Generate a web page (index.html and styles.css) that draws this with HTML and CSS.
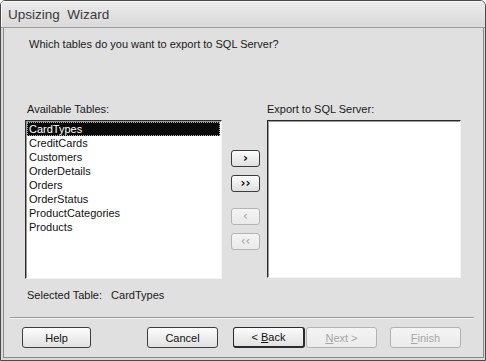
FILE: index.html
```html
<!DOCTYPE html>
<html lang="en">
<head>
    <meta charset="UTF-8">
    <title>Upsizing Wizard</title>
    <link rel="stylesheet" href="styles.css">
</head>
<body>
    <div class="window">
        <div class="titlebar">Upsizing&nbsp; Wizard</div>
        <div class="client">
            <p class="question">Which tables do you want to export to SQL Server?</p>

            <div class="tables">
                <div class="col-left">
                    <div class="label">Available Tables:</div>
                    <ul class="listbox listbox-left">
                        <li class="selected">CardTypes</li>
                        <li>CreditCards</li>
                        <li>Customers</li>
                        <li>OrderDetails</li>
                        <li>Orders</li>
                        <li>OrderStatus</li>
                        <li>ProductCategories</li>
                        <li>Products</li>
                    </ul>
                </div>

                <div class="movers">
                    <button class="mv">&#x203A;</button>
                    <button class="mv">&#x203A;&#x203A;</button>
                    <button class="mv off gap">&#x2039;</button>
                    <button class="mv off">&#x2039;&#x2039;</button>
                </div>

                <div class="col-right">
                    <div class="label">Export to SQL Server:</div>
                    <ul class="listbox listbox-right"></ul>
                </div>
            </div>

            <div class="selected-table">
                <span>Selected Table:</span>
                <span class="sel-name">CardTypes</span>
            </div>

            <div class="separator"></div>

            <div class="footer">
                <button class="btn btn-help">Help</button>
                <button class="btn btn-cancel">Cancel</button>
                <button class="btn btn-back">&lt; <u>B</u>ack</button>
                <button class="btn off btn-next"><u>N</u>ext &gt;</button>
                <button class="btn off btn-finish"><u>F</u>inish</button>
            </div>
        </div>
    </div>
</body>
</html>
```

FILE: styles.css
```css
/* Page */
body {
    margin: 0;
    background: #ffffff;
    font-family: 'Liberation Sans', Arial, sans-serif;
    font-size: 11px;
    color: #1a1a1a;
}

/* Window frame */
.window {
    width: 484px;
    height: 359px;
    border: 1px solid #4a4a4a;
    border-radius: 5px 6px 0 0;
    background: #dadada;
    display: flex;
    flex-direction: column;
    overflow: hidden;
}

.titlebar {
    height: 26px;
    line-height: 28px;
    padding-left: 7px;
    font-size: 13.5px;
    color: #3a3a3a;
    background: linear-gradient(#ececec, #e2e2e2 50%, #d9d9d9);
    border-bottom: 1px solid #9c9c9c;
    box-shadow: inset 1px 1px 0 #f8f8f8;
}

.client {
    flex: 1;
    margin: 0 1px 2px 2px;
    border: 1px solid #8a8a8a;
    border-top: none;
    background: #e0e0e0;
    display: flex;
    flex-direction: column;
}

/* Question */
.question {
    margin: 9px 0 0 25px;
    height: 14px;
    line-height: 14px;
}

/* Tables area */
.tables {
    display: flex;
    margin: 51px 0 0 21px;
}

.label {
    height: 14px;
    line-height: 14px;
    padding-left: 2px;
    margin-bottom: 4px;
}

.col-left {
    width: 197px;
}

.col-right {
    width: 194px;
}

.col-right .label {
    padding-left: 0;
}

.listbox {
    list-style: none;
    margin: 0;
    padding: 1px 1px 0 1px;
    height: 156px;
    background: #ffffff;
    border: 1px solid;
    border-color: #2a2a2a #f4f4f4 #f4f4f4 #2a2a2a;
    box-shadow: inset 1px 1px 0 #9a9a9a;
}

.listbox-right {
    margin-top: 2px;
    height: 155px;
}

.listbox li {
    height: 14px;
    line-height: 14px;
    padding-left: 2px;
    color: #111111;
}

.listbox li.selected {
    height: 12px;
    line-height: 12px;
    background: #0a0a0a;
    color: #ffffff;
    border: 1px dotted #b0b0b0;
    padding-left: 1px;
}

/* Move buttons */
.movers {
    width: 29px;
    margin: 48px 7px 0 9px;
    display: flex;
    flex-direction: column;
    gap: 8px;
}

.mv {
    width: 29px;
    height: 17px;
    padding: 0;
    font-family: 'DejaVu Sans', sans-serif;
    font-size: 12px;
    font-weight: bold;
    line-height: 13px;
    color: #111111;
    background: linear-gradient(#fdfdfd, #ececec 55%, #e0e0e0);
    border: 1px solid #3c3c3c;
    border-radius: 3px;
}

.mv.gap {
    margin-top: 8px;
}

.mv.off {
    color: #a4a4a4;
    font-weight: normal;
    border-color: #b4b4b4;
    background: linear-gradient(#f4f4f4, #eaeaea);
}

/* Selected table line */
.selected-table {
    margin: 9px 0 0 23px;
    height: 14px;
    line-height: 14px;
}

.sel-name {
    margin-left: 6px;
}

.separator {
    margin: 15px 9px 0 6px;
    height: 1px;
    background: #9a9a9a;
    border-bottom: 1px solid #f2f2f2;
}

/* Footer buttons */
.footer {
    display: flex;
    margin: 8px 0 0 18px;
}

.btn {
    width: 69px;
    height: 21px;
    padding: 0;
    font-family: 'Liberation Sans', Arial, sans-serif;
    font-size: 11px;
    color: #111111;
    background: linear-gradient(#fcfcfc, #eeeeee 50%, #e2e2e2);
    border: 1px solid #3e3e3e;
    border-radius: 3px;
}

.btn u {
    text-decoration: underline;
}

.btn.off {
    color: #a6a6a6;
    border-color: #b2b2b2;
    background: linear-gradient(#f4f4f4, #ebebeb);
}

.btn-cancel {
    width: 71px;
    margin-left: 56px;
}

.btn-back {
    width: 72px;
    margin-left: 15px;
    border-width: 1px 2px 2px 1px;
    border-color: #2a2a2a;
}

.btn-next {
    width: 71px;
    margin-left: 1px;
}

.btn-finish {
    width: 71px;
    margin-left: 13px;
}
```
